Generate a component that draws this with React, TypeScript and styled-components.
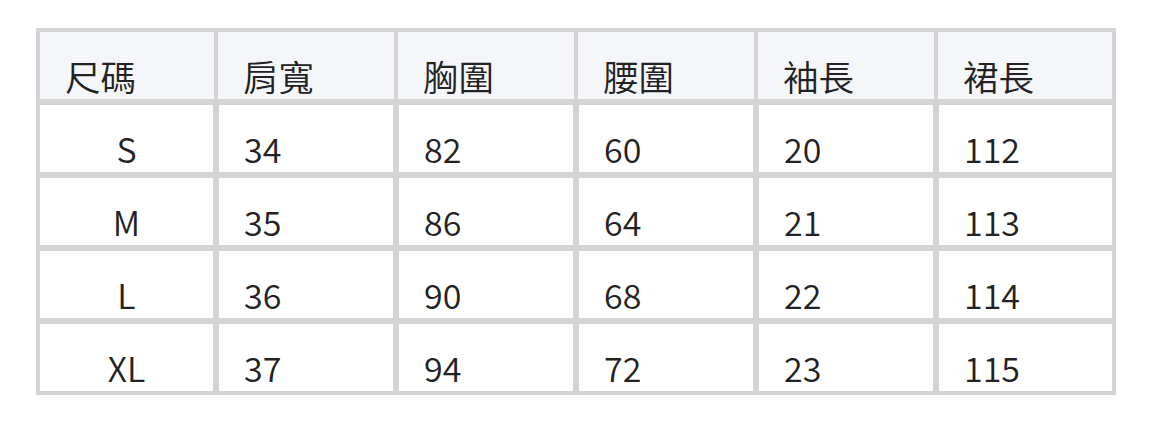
import React from "react";
import styled, { createGlobalStyle } from "styled-components";

const Global = createGlobalStyle`
  html, body { margin: 0; padding: 0; background: #ffffff; }
  body { font-family: "Noto Sans CJK TC", "Noto Sans", sans-serif; color: #222222; }
`;

const Page = styled.div`
  padding-top: 28px;
  display: flex;
  justify-content: center;
`;

const Table = styled.table`
  width: 1080px;
  border-collapse: separate;
  border-spacing: 0;
  table-layout: fixed;
  border: 4px solid #d4d4d4;
  box-sizing: border-box;
`;

const BORDER = "#d4d4d4";

const Th = styled.th<{ $first?: boolean; $last?: boolean; $w: number }>`
  width: ${(p) => p.$w}px;
  box-sizing: border-box;
  background: #f5f6fa;
  text-align: left;
  font-weight: 350;
  font-size: 35.5px;
  line-height: 41px;
  padding: 23px 24px 3px 25px;
  vertical-align: top;
  border-bottom: 6px solid ${BORDER};
  border-left: ${(p) => (p.$first ? "0" : `2px solid ${BORDER}`)};
  border-right: ${(p) => (p.$last ? "0" : `2px solid ${BORDER}`)};
  white-space: nowrap;
`;

const Td = styled.td<{ $first?: boolean; $last?: boolean; $bottom?: boolean }>`
  box-sizing: border-box;
  background: #ffffff;
  text-align: ${(p) => (p.$first ? "center" : "left")};
  font-weight: 350;
  font-size: 34px;
  line-height: 41px;
  padding: ${(p) => (p.$first ? "23px 24px 3px" : "23px 24px 3px 25px")};
  vertical-align: top;
  border-bottom: ${(p) => (p.$bottom ? "0" : `6px solid ${BORDER}`)};
  border-left: ${(p) => (p.$first ? "0" : `3px solid ${BORDER}`)};
  border-right: ${(p) => (p.$last ? "0" : `3px solid ${BORDER}`)};
  white-space: nowrap;
`;

const headers = ["尺碼", "肩寬", "胸圍", "腰圍", "袖長", "裙長"];
const widths = [176, 180, 180, 180, 180, 176];
const rows = [
  ["S", "34", "82", "60", "20", "112"],
  ["M", "35", "86", "64", "21", "113"],
  ["L", "36", "90", "68", "22", "114"],
  ["XL", "37", "94", "72", "23", "115"],
];

export default function App() {
  return (
    <>
      <Global />
      <Page>
        <Table>
          <thead>
            <tr>
              {headers.map((h, i) => (
                <Th key={h} $w={widths[i]} $first={i === 0} $last={i === headers.length - 1}>
                  {h}
                </Th>
              ))}
            </tr>
          </thead>
          <tbody>
            {rows.map((r, ri) => (
              <tr key={r[0]}>
                {r.map((c, ci) => (
                  <Td
                    key={ci}
                    $first={ci === 0}
                    $last={ci === r.length - 1}
                    $bottom={ri === rows.length - 1}
                  >
                    {c}
                  </Td>
                ))}
              </tr>
            ))}
          </tbody>
        </Table>
      </Page>
    </>
  );
}
